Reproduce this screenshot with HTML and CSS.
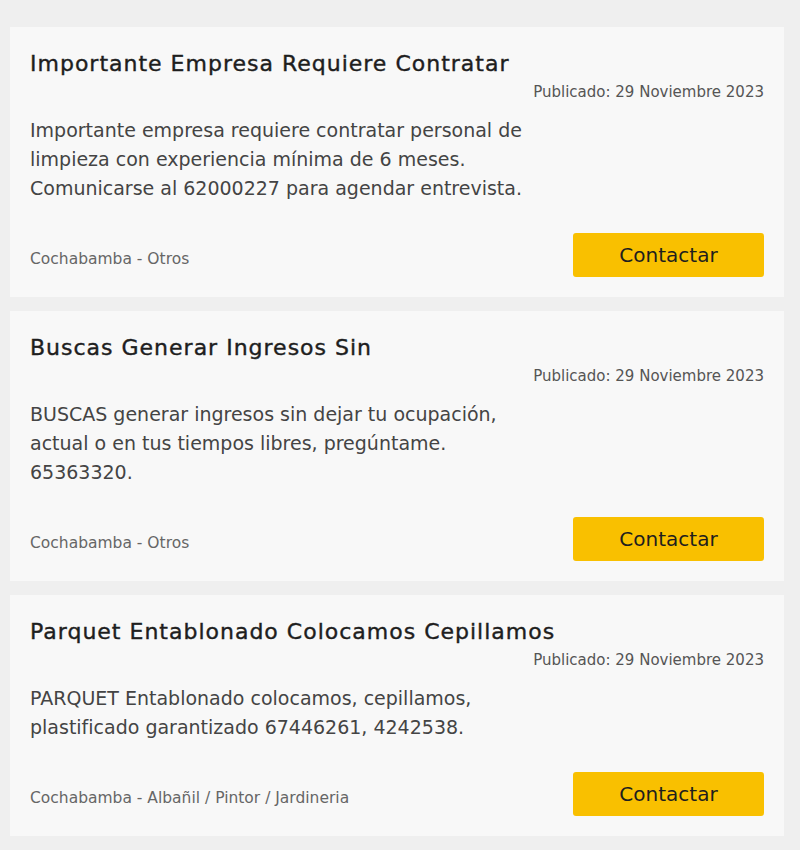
FILE: index.html
```html
<!DOCTYPE html>
<html lang="es">
<head>
  <meta charset="UTF-8">
  <meta name="viewport" content="width=device-width, initial-scale=1.0">
  <title>Clasificados - Cochabamba</title>
  <link rel="stylesheet" href="styles.css">
</head>
<body>
  <main class="listing">

    <!-- Aviso 1 -->
    <article class="ad-card">
      <h2 class="ad-title">Importante Empresa Requiere Contratar</h2>
      <p class="ad-date">Publicado: 29 Noviembre 2023</p>
      <p class="ad-text">Importante empresa requiere contratar personal de limpieza con experiencia mínima de 6 meses. Comunicarse al 62000227 para agendar entrevista.</p>
      <div class="ad-footer">
        <span class="ad-category">Cochabamba - Otros</span>
        <button class="contact-button">Contactar</button>
      </div>
    </article>

    <!-- Aviso 2 -->
    <article class="ad-card">
      <h2 class="ad-title">Buscas Generar Ingresos Sin</h2>
      <p class="ad-date">Publicado: 29 Noviembre 2023</p>
      <p class="ad-text">BUSCAS generar ingresos sin dejar tu ocupación, actual o en tus tiempos libres, pregúntame. 65363320.</p>
      <div class="ad-footer">
        <span class="ad-category">Cochabamba - Otros</span>
        <button class="contact-button">Contactar</button>
      </div>
    </article>

    <!-- Aviso 3 -->
    <article class="ad-card">
      <h2 class="ad-title">Parquet Entablonado Colocamos Cepillamos</h2>
      <p class="ad-date">Publicado: 29 Noviembre 2023</p>
      <p class="ad-text">PARQUET Entablonado colocamos, cepillamos, plastificado garantizado 67446261, 4242538.</p>
      <div class="ad-footer">
        <span class="ad-category">Cochabamba - Albañil / Pintor / Jardineria</span>
        <button class="contact-button">Contactar</button>
      </div>
    </article>

  </main>
</body>
</html>
```

FILE: styles.css
```css
:root {
  --page-bg: #efefef;
  --card-bg: #f8f8f8;
  --title-color: #1e1e1e;
  --text-color: #444;
  --muted-color: #666;
  --accent: #f9c000;
}

* {
  box-sizing: border-box;
  margin: 0;
  padding: 0;
}

body {
  font-family: "DejaVu Sans", "Liberation Sans", sans-serif;
  background-color: var(--page-bg);
  color: var(--text-color);
}

.listing {
  display: flex;
  flex-direction: column;
  gap: 14px;
  padding: 27px 16px 14px 10px;
}

.ad-card {
  background-color: var(--card-bg);
  padding: 23px 20px 20px;
}

.ad-title {
  font-size: 22px;
  font-weight: 400;
  letter-spacing: 1px;
  line-height: 28px;
  color: var(--title-color);
  -webkit-text-stroke: 0.4px var(--title-color);
}

.ad-date {
  margin-top: 4px;
  font-size: 15px;
  line-height: 20px;
  color: #555;
  text-align: right;
}

.ad-text {
  margin-top: 14px;
  max-width: 510px;
  font-size: 19px;
  line-height: 29px;
  color: var(--text-color);
}

.ad-footer {
  display: flex;
  justify-content: space-between;
  align-items: center;
  margin-top: 30px;
}

.ad-category {
  margin-top: 7px;
  font-size: 15.5px;
  color: var(--muted-color);
}

.contact-button {
  width: 191px;
  height: 44px;
  background-color: var(--accent);
  color: var(--title-color);
  border: none;
  border-radius: 3px;
  font-family: inherit;
  font-size: 20px;
  cursor: pointer;
}

.contact-button:hover {
  background-color: #e8b300;
}
```
